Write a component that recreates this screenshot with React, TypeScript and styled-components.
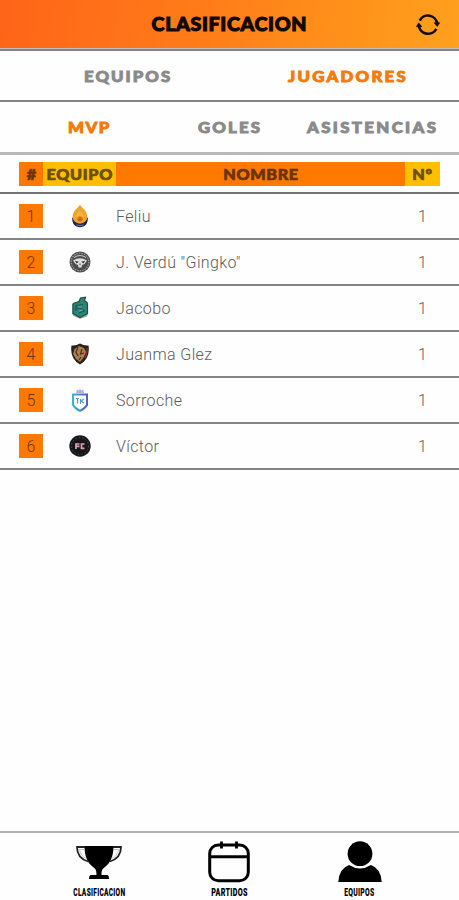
import React from "react";
import styled, { createGlobalStyle } from "styled-components";

const Global = createGlobalStyle`
  * { box-sizing: border-box; }
  html, body { margin: 0; background: #fff; }
  button { border: 0; background: none; padding: 0; margin: 0; font: inherit; color: inherit; }
`;

const Screen = styled.div`
  width: 459px;
  height: 900px;
  display: flex;
  flex-direction: column;
  background: #fefefe;
  overflow: hidden;
  font-family: Roboto, sans-serif;
`;

const Header = styled.header`
  height: 48px;
  flex: none;
  display: grid;
  grid-template-columns: 62px 1fr 62px;
  align-items: center;
  justify-items: center;
  background: linear-gradient(100deg, #ff6418 0%, #ff7c19 45%, #ff901a 72%, #ffa01e 100%);
`;

const Title = styled.h1`
  grid-column: 2;
  margin: 0 0 1px;
  font: 900 18px/20px Lato, sans-serif;
  letter-spacing: 0.6px;
  -webkit-text-stroke: 1px #100800;
  color: #100800;
  transform: scaleX(1.09);
`;

const Refresh = styled.button`
  width: 24px;
  height: 24px;
  margin-top: 2px;
  svg { display: block; }
`;

const Rule = styled.div<{ $color: string; $h?: number }>`
  flex: none;
  height: ${(p) => p.$h ?? 2}px;
  background: ${(p) => p.$color};
`;

const Tabs = styled.nav<{ $columns: string; $h: number }>`
  flex: none;
  height: ${(p) => p.$h}px;
  display: grid;
  grid-template-columns: ${(p) => p.$columns};
  align-items: center;
`;

const Tab = styled.button<{ $active?: boolean; $spacing: number }>`
  color: ${(p) => (p.$active ? "#f57a08" : "#8a8a8a")};
  font: 900 15px/20px Lato, sans-serif;
  letter-spacing: ${(p) => p.$spacing}px;
  -webkit-text-stroke: 0.9px currentColor;
  white-space: nowrap;
  text-align: left;
  transform: scaleX(1.12);
  transform-origin: left center;
`;

const TableHead = styled.div`
  flex: none;
  height: 37px;
  padding: 7px 19px 6px;
  display: grid;
  grid-template-columns: 24px 73px 289px 35px;
`;

const HeadCell = styled.div<{ $yellow?: boolean }>`
  display: flex;
  align-items: center;
  justify-content: center;
  background: ${(p) => (p.$yellow ? "#ffbf00" : "#ff7900")};
  color: ${(p) => (p.$yellow ? "#6c5000" : "#6c3300")};
`;

const HeadText = styled.span`
  font: 900 15px/22px Lato, sans-serif;
  letter-spacing: 0.6px;
  margin-right: -0.6px;
  -webkit-text-stroke: 0.7px currentColor;
  white-space: nowrap;
  transform: scaleX(1.08);
`;

const Row = styled.div`
  flex: none;
  height: 46px;
  padding: 0 19px;
  display: grid;
  grid-template-columns: 24px 73px 289px 35px;
  align-items: center;
  border-bottom: 2px solid #858585;
`;

const Rank = styled.div`
  height: 24px;
  background: #ff7900;
  color: #743600;
  font-size: 16px;
  line-height: 25px;
  text-align: center;
  font-weight: 300;
`;

const Crest = styled.div`
  display: flex;
  justify-content: center;
  svg { display: block; }
`;

const Player = styled.div`
  font-size: 16px;
  line-height: 22px;
  padding-top: 2px;
  font-weight: 300;
  color: #5c5c5c;
  letter-spacing: 0.38px;
`;

const Count = styled.div`
  font-size: 16px;
  line-height: 22px;
  padding-top: 2px;
  font-weight: 300;
  color: #606060;
  text-align: center;
`;

const Fill = styled.div`
  flex: 1;
`;

const BottomBar = styled.nav`
  flex: none;
  height: 67px;
  padding: 0 34px;
  display: grid;
  grid-template-columns: repeat(3, 1fr);
`;

const BottomItem = styled.button`
  display: flex;
  flex-direction: column;
  align-items: center;
  padding-top: 8px;
  color: #000;
  svg { display: block; flex: none; }
`;

const BottomLabel = styled.span<{ $scale: number }>`
  font: 900 10px/12px Roboto, sans-serif;
  letter-spacing: 0.4px;
  margin-top: 4px;
  transform: scaleX(${(p) => p.$scale});
  white-space: nowrap;
`;

const RefreshIcon = () => (
  <svg width="24" height="24" viewBox="0 0 24 24" fill="none" stroke="#170c00" strokeWidth="2.600">
    <path d="M3.700 7.600A9.300 9.300 0 0 1 21.200 11" />
    <path d="M20.300 15.800A9.300 9.300 0 0 1 2.800 12.500" />
    <path d="M18 9.800h5.800L21.300 13.600zM.2 13.700 2.700 9.800l3.300 3.900z" fill="#170c00" strokeWidth=".5" />
  </svg>
);

const crests: React.ReactNode[] = [
  <svg key="flame" width="18" height="24" viewBox="0 0 18 24">
    <path d="M1.200 13C.8 20 4 23 9 23.300 14 23 17.200 20 16.800 13L14 17H4z" fill="#1d2352" />
    <path d="M9 .8C10.500 3.500 16.300 7 16.300 12.500 16.300 17 12.500 19.500 9 19.500S1.700 17 1.700 12.500C1.700 7 7.500 3.500 9 .8z" fill="#eca62d" />
    <path d="M5 13c0-3 2-4 4-6 2 2 4 3 4 6z" fill="#f8b53a" />
    <circle cx="9" cy="15" r="2.800" fill="#e8741b" />
    <path d="M7.500 15.500h3M9 13.500v3" stroke="#b9532a" strokeWidth=".8" />
    <path d="M5.500 21q3.500 1.300 7 0" stroke="#8f94ad" strokeWidth=".8" fill="none" />
  </svg>,
  <svg key="skull" width="22" height="22" viewBox="0 0 22 22">
    <circle cx="11" cy="11" r="10.500" fill="#4c4c4c" />
    <circle cx="11" cy="11" r="8.800" fill="none" stroke="#999" strokeWidth="1.300" strokeDasharray="1.500 1" />
    <path d="M4 9.500q7-4.500 14 0l-2.500 3.500-2.500 1-.5 2.500h-3L9 14l-2.500-1z" fill="#dcdcdc" />
    <path d="M6 9.800l3.700 1-2.200 1.700zM16 9.800l-3.700 1 2.200 1.700zM10.500 12.500h1v1.500h-1z" fill="#333" />
    <path d="M5 6.500Q11 2.500 17 6.500" stroke="#c8c8c8" fill="none" />
  </svg>,
  <svg key="teal" width="18" height="24" viewBox="0 0 18 24">
    <path d="M1.500 7.500 8 5.500 9.500 2l5-.8-1 3.300 3.500 2.500v11L9 22 1.500 18z" fill="#2b8577" />
    <path d="M1.500 17.500 9 21.500l8-4-1 3-7 2.300-7-3z" fill="#9ba8a4" />
    <path d="M2 7.500 8 5.500 9.500 2l5-.8-1 3.300 3 2.500M2 8v9.500l7 4 7.500-4V7.500" fill="none" stroke="#244b48" strokeWidth="1.200" />
    <path d="M5 15V9.500l7-1M6 12.500l4-.5 3 3-5 2" fill="none" stroke="#175850" strokeWidth="1.200" />
    <path d="M7 11h4M8 15l4-1" stroke="#63b4a4" strokeWidth="1" />
  </svg>,
  <svg key="lion" width="20" height="22" viewBox="0 0 20 22">
    <path d="M1.500 2.500Q6 3 10 .5 14 3 18.500 2.500 20.500 16 10 21.500-.5 16 1.500 2.500z" fill="#27201b" />
    <path d="M4.500 6 9 3l5 2 2 4-2 5-4 5-4-3-3-5z" fill="#ad7d50" />
    <path d="m8 4-2 5 2 4M12 6l-1.500 5 3.500-1M11 14l-2 3" fill="none" stroke="#49301e" strokeWidth="1.200" />
    <path d="M17.200 5q0 6-2.200 10" stroke="#a33328" strokeWidth="1" fill="none" />
  </svg>,
  <svg key="blue" width="18" height="24" viewBox="0 0 18 24">
    <defs>
      <linearGradient id="shield" x1="0" x2="1">
        <stop stopColor="#35b5dc" />
        <stop offset="1" stopColor="#5360bd" />
      </linearGradient>
    </defs>
    <path d="M5 5 6 1.500l2 1L9 .8l1.200 1.700 2.300-1L13 5z" fill="#b7aee0" />
    <path d="M2 6.500h14v10.500Q14 20.500 9 22.800 4 20.500 2 17z" fill="#fff" stroke="url(#shield)" strokeWidth="2" />
    <path d="M5 10.500h3M6.500 10.500v5M13 11l-3 2 3 2M9.500 11v5" fill="none" stroke="#4b9fcb" strokeWidth="1.200" />
  </svg>,
  <svg key="fc" width="22" height="22" viewBox="0 0 22 22">
    <circle cx="11" cy="11" r="10.700" fill="#17161a" />
    <circle cx="11" cy="11" r="8.500" fill="none" stroke="#55535a" strokeWidth=".9" strokeDasharray="1.500 2" />
    <path d="M7 14V9h3.500M7 11.300h3.500M15.500 9h-3v4.300h3" fill="none" stroke="#e6a4b2" strokeWidth="1.700" />
  </svg>,
];

const players = ["Feliu", "J. Verdú \"Gingko\"", "Jacobo", "Juanma Glez", "Sorroche", "Víctor"];

const TrophyIcon = () => (
  <svg width="48" height="42" viewBox="0 0 48 42">
    <path d="M9.500 5h29c0 10-3 17-8.500 21-3 2-3.500 4-3.500 8H32q2 0 2 4H14q0-4 2-4h5.500c0-4-.5-6-3.500-8C12.500 22 9.500 15 9.500 5z" fill="#000" />
    <path d="M10 6H2q0 11 11 14.500M38 6h8q0 11-11 14.500" fill="none" stroke="#222" strokeWidth="1.800" />
    <path d="M10 8.500H4.500q1 7 7 8.700M38 8.500h5.500q-1 7-7 8.700" fill="none" stroke="#aaa" strokeWidth=".7" />
  </svg>
);

const CalendarIcon = () => (
  <svg width="44" height="42" viewBox="0 0 44 42" fill="none" stroke="#000" strokeWidth="3">
    <rect x="2.700" y="4" width="38.600" height="35.800" rx="8.500" />
    <path d="M3 15.800h38" />
    <path d="M14.500.5v7M29.500.5v7" strokeWidth="2.800" />
  </svg>
);

const PersonIcon = () => (
  <svg width="44" height="42" viewBox="0 0 44 42">
    <circle cx="22" cy="12.700" r="12.400" />
    <path d="M.3 41Q1 27.500 11 24q11 7 22 0Q43 27.500 43.700 41z" />
  </svg>
);

export default function App() {
  return (
    <>
      <Global />
      <Screen>
        <Header>
          <Title>CLASIFICACION</Title>
          <Refresh aria-label="Actualizar"><RefreshIcon /></Refresh>
        </Header>
        <Rule $color="linear-gradient(#c5beb8 0 1px, #858589 1px 3px)" $h={3} />
        <Tabs $columns="84px 204px 1fr" $h={49}>
          <span />
          <Tab $spacing={1.8}>EQUIPOS</Tab>
          <Tab $active $spacing={2}>JUGADORES</Tab>
        </Tabs>
        <Rule $color="#858585" />
        <Tabs $columns="68px 130px 109px 1fr" $h={50}>
          <span />
          <Tab $active $spacing={1.3}>MVP</Tab>
          <Tab $spacing={1.9}>GOLES</Tab>
          <Tab $spacing={2.1}>ASISTENCIAS</Tab>
        </Tabs>
        <Rule $color="#b9b9b9" $h={3} />
        <TableHead>
          <HeadCell><HeadText>#</HeadText></HeadCell>
          <HeadCell $yellow><HeadText>EQUIPO</HeadText></HeadCell>
          <HeadCell><HeadText>NOMBRE</HeadText></HeadCell>
          <HeadCell $yellow><HeadText>Nº</HeadText></HeadCell>
        </TableHead>
        <Rule $color="#747474" />
        {players.map((name, i) => (
          <Row key={name}>
            <Rank>{i + 1}</Rank>
            <Crest>{crests[i]}</Crest>
            <Player>{name}</Player>
            <Count>1</Count>
          </Row>
        ))}
        <Fill />
        <Rule $color="#b0b0b0" $h={2} />
        <BottomBar>
          <BottomItem><TrophyIcon /><BottomLabel $scale={0.66}>CLASIFICACION</BottomLabel></BottomItem>
          <BottomItem><CalendarIcon /><BottomLabel $scale={0.72}>PARTIDOS</BottomLabel></BottomItem>
          <BottomItem><PersonIcon /><BottomLabel $scale={0.68}>EQUIPOS</BottomLabel></BottomItem>
        </BottomBar>
      </Screen>
    </>
  );
}
